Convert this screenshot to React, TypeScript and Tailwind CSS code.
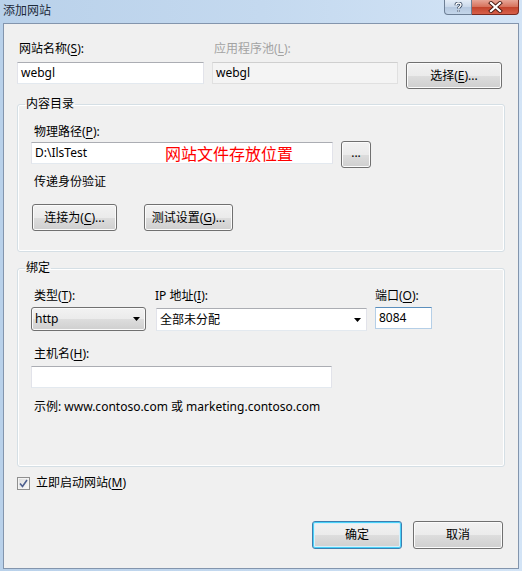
import type { ReactNode } from 'react';

const btnBase =
  'flex items-center justify-center rounded-[3px] border border-[#707070] bg-[linear-gradient(#f2f2f2_0%,#ebebeb_50%,#dddddd_51%,#cfcfcf_100%)] shadow-[inset_0_0_0_1px_#fbfbfb] text-black';

const boxInput =
  'flex items-center border border-[#e2e3ea] border-t-[#abadb3] border-b-[#e3e9ef] bg-white pl-[3px]';

function Key({ children }: { children: ReactNode }) {
  return <u className="underline-offset-[2px] decoration-1">{children}</u>;
}

function Label({ children, className = '' }: { children: ReactNode; className?: string }) {
  return <div className={'h-[16px] whitespace-nowrap leading-[16px] ' + className}>{children}</div>;
}

function Arrow() {
  return (
    <svg width="7" height="4" viewBox="0 0 7 4" className="shrink-0">
      <path d="M0 0H7L3.5 4Z" fill="#000" />
    </svg>
  );
}

function Group({ title, children, className = '' }: { title: string; children: ReactNode; className?: string }) {
  return (
    <fieldset
      className={
        'w-[488px] rounded-[3px] border border-[#d5dfe5] shadow-[inset_0_0_0_1px_#fff] ' + className
      }
    >
      <legend className="ml-[7px] h-[16px] px-[1px] leading-[16px]">{title}</legend>
      {children}
    </fieldset>
  );
}

export default function App() {
  return (
    <div className="h-[571px] w-[522px] bg-[linear-gradient(90deg,#b9d1ea_0%,#c4d9ef_50%,#d3e4f6_100%)] text-[12px] text-black [font-family:'Noto_Sans','Noto_Sans_CJK_SC',sans-serif]">
      {/* title bar */}
      <div className="flex h-[23px] items-start">
        <div className="pl-[3px] pt-[2px] leading-[16px] text-[#1e2a3a] [font-family:'Noto_Sans_CJK_SC',sans-serif]">
          添加网站
        </div>
        <div className="ml-auto mr-[3px] flex">
          <div className="flex h-[15px] w-[28px] items-center justify-center rounded-bl-[4px] border border-t-0 border-[#6d7f95] bg-[linear-gradient(#e4edf7_0%,#c9d8ea_50%,#b5c8df_51%,#c4d6ea_100%)]">
            <svg width="9" height="11" viewBox="0 0 9 11">
              <path
                d="M2 3.2C2 1.8 3.2 1 4.5 1S7 1.8 7 3.1C7 4.6 4.5 4.8 4.5 6.6M4.5 8.6V9.6"
                fill="none"
                stroke="#34465e"
                strokeWidth="3"
              />
              <path
                d="M2 3.2C2 1.8 3.2 1 4.5 1S7 1.8 7 3.1C7 4.6 4.5 4.8 4.5 6.6M4.5 8.6V9.6"
                fill="none"
                stroke="#fff"
                strokeWidth="1.4"
              />
            </svg>
          </div>
          <div className="flex h-[15px] w-[47px] items-center justify-center rounded-br-[4px] border border-l-0 border-t-0 border-[#7a2a20] bg-[linear-gradient(#e7a697_0%,#d6705a_50%,#c2432b_51%,#d7604a_100%)]">
            <svg width="15" height="12" viewBox="0 0 15 12">
              <path d="M3 2L12 10M12 2L3 10" stroke="#4a1a12" strokeWidth="4" strokeLinecap="square" />
              <path d="M3 2L12 10M12 2L3 10" stroke="#fff" strokeWidth="2.2" strokeLinecap="square" />
            </svg>
          </div>
        </div>
      </div>

      {/* client area */}
      <div className="mx-[3px] flex h-[546px] flex-col border border-[#8395ad] bg-[#f0f0f0] px-[13px] pt-[17px]">
        {/* site name row */}
        <div className="flex">
          <div className="flex w-[187px] flex-col">
            <Label className="pl-[2px]">
              网站名称(<Key>S</Key>):
            </Label>
            <div className={boxInput + ' mt-[5px] h-[22px]'}>webgl</div>
          </div>
          <div className="ml-[8px] flex w-[186px] flex-col">
            <Label className="pl-[2px] text-[#a3a3a3]">
              应用程序池(<Key>L</Key>):
            </Label>
            <div className="mt-[5px] flex h-[22px] items-center border border-[#e0e0e0] border-t-[#cfcfcf] bg-[#f4f4f4] pl-[3px]">
              webgl
            </div>
          </div>
          <div className="ml-[8px] flex flex-col">
            <div className="h-[16px]" />
            <button className={btnBase + ' mt-[5px] h-[27px] w-[96px]'}>
              选择(<Key>E</Key>)...
            </button>
          </div>
        </div>

        {/* content directory */}
        <Group title="内容目录" className="mt-[7px]">
          <div className="pb-[20px] pl-[13px] pt-[12px]">
            <Label className="pl-[3px]">
              物理路径(<Key>P</Key>):
            </Label>
            <div className="mt-[2px] flex items-start">
              <div className={boxInput + ' h-[22px] w-[302px]'}>
                <span className="inline-block w-[130px]">D:\IlsTest</span>
                <span className="text-[16px] leading-[20px] text-[#ff0000] [font-family:'Noto_Sans_CJK_SC',sans-serif]">
                  网站文件存放位置
                </span>
              </div>
              <button className={btnBase + ' -mt-[1px] ml-[8px] h-[27px] w-[30px] pb-[4px]'}>...</button>
            </div>
            <Label className="mt-[6px] pl-[3px]">传递身份验证</Label>
            <div className="mt-[14px] flex">
              <button className={btnBase + ' ml-[1px] h-[27px] w-[85px]'}>
                连接为(<Key>C</Key>)...
              </button>
              <button className={btnBase + ' ml-[27px] h-[27px] w-[89px]'}>
                测试设置(<Key>G</Key>)...
              </button>
            </div>
          </div>
        </Group>

        {/* bindings */}
        <Group title="绑定" className="mt-[8px]">
          <div className="pb-[51px] pl-[13px] pt-[12px]">
            <div className="flex">
              <div className="flex w-[115px] flex-col">
                <Label className="pl-[3px]">
                  类型(<Key>T</Key>):
                </Label>
                <div className={btnBase + ' mt-[3px] h-[24px] !justify-between pl-[3px] pr-[5px]'}>
                  <span>http</span>
                  <Arrow />
                </div>
              </div>
              <div className="ml-[10px] flex w-[211px] flex-col">
                <Label className="-ml-[1px]">
                  IP 地址(<Key>I</Key>):
                </Label>
                <div className={boxInput + ' mt-[4px] h-[23px] justify-between pr-[5px]'}>
                  <span>全部未分配</span>
                  <Arrow />
                </div>
              </div>
              <div className="ml-[8px] flex w-[57px] flex-col">
                <Label>
                  端口(<Key>O</Key>):
                </Label>
                <div className="mt-[3px] flex h-[22px] items-center border border-[#b5cfe7] border-t-[#5b8fbd] bg-white pl-[3px]">
                  8084
                </div>
              </div>
            </div>
            <Label className="mt-[15px] pl-[3px]">
              主机名(<Key>H</Key>):
            </Label>
            <div className={boxInput + ' mt-[4px] h-[22px] w-[301px]'} />
            <Label className="mt-[11px] pl-[3px]">示例: www.contoso.com 或 marketing.contoso.com</Label>
          </div>
        </Group>

        {/* start checkbox */}
        <div className="mt-[8px] flex h-[16px] items-center">
          <div className="flex h-[13px] w-[13px] items-center justify-center border border-[#8f8f8f] bg-[linear-gradient(135deg,#dcdcdc,#fbfbfb)] shadow-[inset_0_0_0_1px_#f4f4f4]">
            <svg width="9" height="9" viewBox="0 0 9 9">
              <path d="M1 4.5L3.5 7.5L8 1" fill="none" stroke="#4d5f8f" strokeWidth="1.6" />
            </svg>
          </div>
          <span className="ml-[6px] leading-[16px]">
            立即启动网站(<Key>M</Key>)
          </span>
        </div>

        {/* dialog buttons */}
        <div className="mr-[2px] mt-[30px] flex justify-end gap-[11px]">
          <button className="flex h-[28px] w-[90px] items-center justify-center rounded-[3px] border border-[#3c7fb1] bg-[linear-gradient(#f2f2f2_0%,#ebebeb_50%,#dddddd_51%,#cfcfcf_100%)] shadow-[inset_0_0_0_1px_#48d1f8,inset_0_0_0_2px_#d8f0fb]">
            确定
          </button>
          <button className={btnBase + ' h-[28px] w-[90px]'}>取消</button>
        </div>
      </div>
    </div>
  );
}
